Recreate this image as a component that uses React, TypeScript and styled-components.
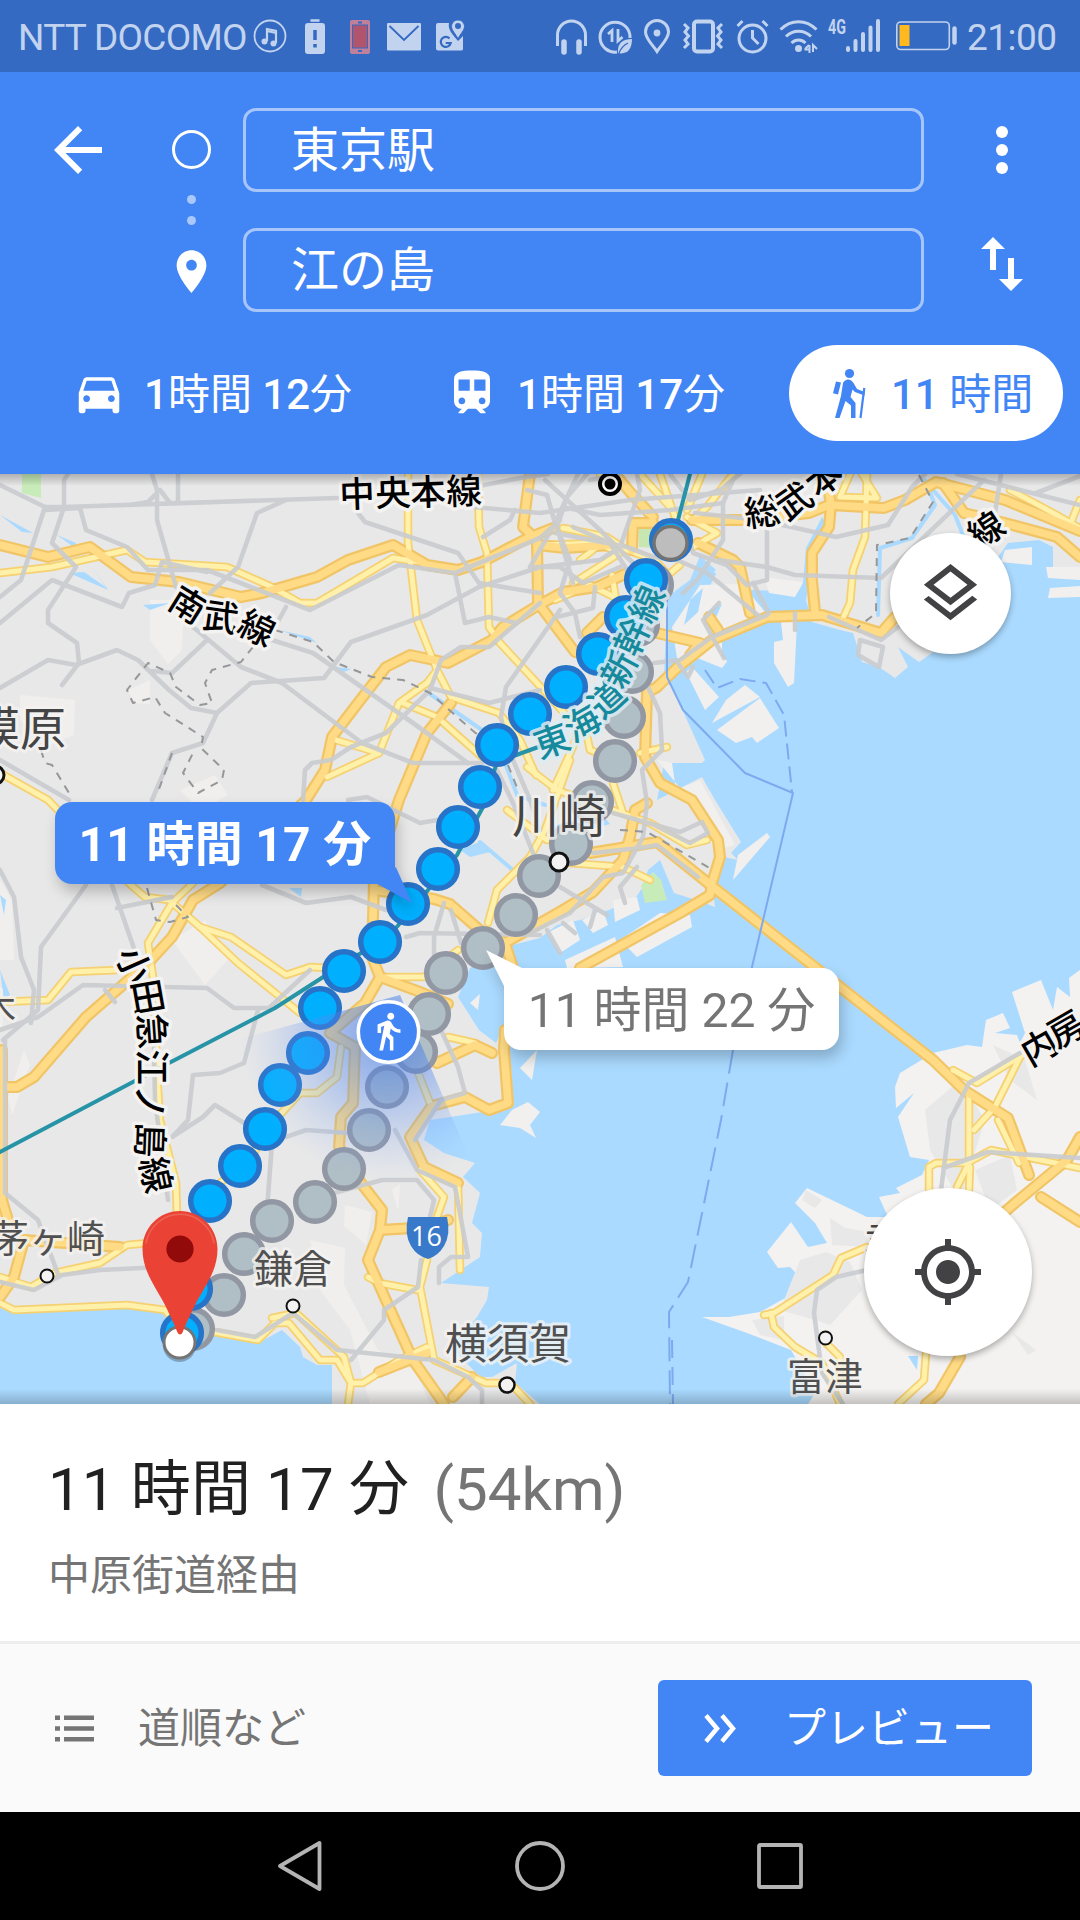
import React from "react";
import styled, { createGlobalStyle } from "styled-components";

const GlobalStyle = createGlobalStyle`
  * {
    box-sizing: border-box;
  }
  body {
    margin: 0;
    background: #000;
    font-family: Roboto, "Noto Sans CJK JP", sans-serif;
  }
`;

const Screen = styled.div`
  width: 1080px;
  height: 1920px;
  display: flex;
  flex-direction: column;
  overflow: hidden;
`;

/* ---------- status bar ---------- */

const StatusBar = styled.div`
  height: 72px;
  flex: none;
  display: flex;
  align-items: center;
  background: #346ac1;
  color: #c2d3ef;
  padding-left: 17px;
  font-size: 37px;
  line-height: 72px;
  white-space: nowrap;
`;

const Carrier = styled.span`
  width: 236px;
  letter-spacing: -0.7px;
  padding: 3px 0 0 1px;
`;

const Clock = styled.span`
  margin-left: 10px;
  padding-top: 3px;
  letter-spacing: -0.5px;
`;

const StatusIcon = styled.svg<{ $w: number; $gap: number }>`
  width: ${(p) => p.$w}px;
  height: 36px;
  flex: none;
  margin-left: ${(p) => p.$gap}px;
  fill: none;
  stroke: #c2d3ef;
  stroke-width: 3;
  overflow: visible;
`;

/* ---------- header ---------- */

const Header = styled.header`
  height: 402px;
  flex: none;
  background: #4285f5;
  color: #fff;
`;

const SearchArea = styled.div`
  height: 240px;
  padding-top: 36px;
  display: grid;
  grid-template-columns: 114px 129px 681px 156px;
`;

const NavColumn = styled.div`
  padding: 6px 0 0 42px;
`;

const MarkerColumn = styled.div`
  display: flex;
  flex-direction: column;
  align-items: center;
  padding: 22px 0 0 26px;
`;

const OriginRing = styled.div`
  width: 39px;
  height: 39px;
  border: 3px solid #fff;
  border-radius: 50%;
`;

const MarkerDot = styled.div<{ $top: number }>`
  width: 9px;
  height: 9px;
  margin-top: ${(p) => p.$top}px;
  border-radius: 50%;
  background: #a9c8fc;
`;

const FieldColumn = styled.div`
  display: flex;
  flex-direction: column;
  gap: 36px;
`;

const Field = styled.div`
  height: 84px;
  border: 3px solid #a5c5fb;
  border-radius: 13px;
  padding-left: 45px;
  font-size: 48px;
  line-height: 80px;
`;

const MenuColumn = styled.div`
  display: flex;
  flex-direction: column;
  padding: 6px 0 0 42px;
  gap: 42px;
`;

const Icon = styled.svg<{ $size: number }>`
  width: ${(p) => p.$size}px;
  height: ${(p) => p.$size}px;
  flex: none;
  display: block;
  fill: currentColor;
`;

const PlaceIcon = styled(Icon)`
  margin-top: 21px;
`;

const Tabs = styled.div`
  display: flex;
  padding: 33px 0 0 39px;
  gap: 19px;
`;

const Tab = styled.div<{ $active?: boolean; $width: number }>`
  width: ${(p) => p.$width}px;
  height: 96px;
  border-radius: 48px;
  padding-left: 33px;
  display: flex;
  align-items: center;
  gap: ${(p) => (p.$active ? 15 : 18)}px;
  font-size: 42px;
  white-space: nowrap;
  background: ${(p) => (p.$active ? "#fff" : "transparent")};
  color: ${(p) => (p.$active ? "#4285f5" : "#fff")};
`;

const TabLabel = styled.span`
  padding-bottom: 5px;
  b {
    font-weight: 500;
  }
`;

/* ---------- map ---------- */

const MapArea = styled.div`
  height: 930px;
  flex: none;
  position: relative;
  overflow: hidden;
  background: #e8e8e8;
  &::after {
    content: "";
    position: absolute;
    inset: 0;
    background: linear-gradient(rgba(0, 0, 0, 0.24), transparent 12px),
      linear-gradient(to top, rgba(0, 0, 0, 0.2), transparent 15px);
    pointer-events: none;
  }
`;

const MapCanvas = styled.svg`
  display: block;
  width: 1080px;
  height: 930px;
  stroke-linejoin: round;
  stroke-linecap: round;
`;

const RoundButton = styled.div<{ $size: number; $top: number; $right: number }>`
  position: absolute;
  top: ${(p) => p.$top}px;
  right: ${(p) => p.$right}px;
  width: ${(p) => p.$size}px;
  height: ${(p) => p.$size}px;
  border-radius: 50%;
  background: #fff;
  color: #424244;
  display: flex;
  align-items: center;
  justify-content: center;
  box-shadow: 0 3px 6px rgba(0, 0, 0, 0.3);
`;

const Callout = styled.div<{ $left: number; $top: number; $width: number; $main?: boolean }>`
  position: absolute;
  left: ${(p) => p.$left}px;
  top: ${(p) => p.$top}px;
  width: ${(p) => p.$width}px;
  height: 82px;
  padding-bottom: 6px;
  border-radius: 17px;
  display: flex;
  align-items: center;
  justify-content: center;
  font-size: 48px;
  letter-spacing: ${(p) => (p.$main ? 0.3 : 0)}px;
  font-weight: ${(p) => (p.$main ? 700 : 400)};
  white-space: nowrap;
  background: ${(p) => (p.$main ? "#4285f5" : "#fff")};
  color: ${(p) => (p.$main ? "#fff" : "#757575")};
  filter: drop-shadow(3px 8px 7px rgba(0, 0, 0, 0.22));
  &::after {
    content: "";
    position: absolute;
    width: 36px;
    height: 36px;
    background: inherit;
    ${(p) =>
      p.$main
        ? "right: -17px; bottom: -19px; clip-path: polygon(0 45%, 55% 0, 100% 100%);"
        : "left: -18px; top: -18px; clip-path: polygon(0 0, 100% 50%, 50% 100%);"}
  }
`;

/* ---------- bottom ---------- */

const Summary = styled.section`
  height: 240px;
  flex: none;
  background: #fff;
  border-bottom: 3px solid #eeeeef;
  padding: 42px 0 0 48px;
`;

const Duration = styled.div`
  font-size: 60px;
  line-height: 88px;
  letter-spacing: 0.15px;
  color: #212121;
  span {
    color: #757575;
    letter-spacing: 0;
    margin-left: 24.5px;
  }
`;

const Via = styled.div`
  margin-top: 12px;
  font-size: 42px;
  line-height: 60px;
  color: #757575;
`;

const Actions = styled.div`
  height: 168px;
  flex: none;
  background: #fafafa;
  display: flex;
  align-items: center;
  justify-content: space-between;
  padding: 0 48px;
  font-size: 42px;
  color: #757575;
`;

const ActionLabel = styled.span`
  padding-bottom: 7px;
`;

const Steps = styled.div`
  display: flex;
  align-items: center;
  gap: 36px;
`;

const PreviewButton = styled.div`
  width: 374px;
  height: 96px;
  border-radius: 6px;
  background: #4285f5;
  color: #fff;
  display: flex;
  align-items: center;
  padding-left: 36px;
  gap: 36px;
`;

const NavBar = styled.nav`
  height: 108px;
  flex: none;
  background: #000;
  display: flex;
  justify-content: center;
  align-items: center;
  gap: 186px;
  svg {
    width: 54px;
    height: 54px;
    fill: none;
    stroke: #b4b4b4;
    stroke-width: 3.8;
    stroke-linejoin: round;
  }
`;

/* ---------- map data, in screen pixels ---------- */

const SEA = [
  "667,597 690,580 700,556 716,574 703,600 730,604 752,590 798,592 803,583 806,548 822,517 828,527 812,560 806,600 812,622 840,630 853,633 862,662 879,667 895,678 908,667 898,647 919,662 932,653 970,600 998,557 1008,543 1039,540 1053,547 1053,567 1080,580 1080,970 1069,978 1070,997 1057,987 1053,1010 1041,980 1012,992 1025,1033 1020,1043 1017,1035 995,1033 1010,1028 1003,1013 986,1020 982,1047 967,1045 933,1053 900,1073 895,1087 896,1108 914,1093 898,1117 910,1157 929,1160 922,1175 896,1188 900,1193 879,1197 888,1217 867,1217 807,1188 795,1203 815,1223 827,1243 808,1247 791,1222 767,1252 778,1268 790,1267 800,1277 795,1293 778,1302 760,1312 729,1317 702,1317 747,1333 791,1350 815,1393 808,1404 540,1404 515,1383 517,1363 492,1377 480,1377 451,1347 477,1317 487,1300 489,1287 441,1283 480,1257 482,1233 472,1223 480,1193 463,1177 475,1163 444,1153 424,1140 430,1120 496,1110 508,1103 512,1075 503,1027 496,1043 479,1030 458,997 470,968 505,947 540,938 557,925 580,920 609,910 636,897 643,887 648,870 660,860 674,893 705,903 715,907 712,883 724,857 738,860 731,853 741,842 715,800 702,777 657,800 664,763 702,763 705,760 672,687 664,680",
  "0,1308 14,1313 127,1307 162,1313 179,1333 217,1333 258,1343 282,1330 300,1347 303,1357 317,1365 332,1365 332,1404 0,1404",
];

const WATER_BITS = [
  "0,515 22,527 33,533 22,532",
  "57,535 76,543 75,548",
  "69,573 84,572 107,588 90,565 108,590",
  "143,605 170,603 150,610",
  "279,630 310,637 317,643",
  "336,667 351,669 344,672",
  "289,888 302,888 301,897",
  "460,850 479,842 490,852 470,857",
  "0,895 6,900 4,915",
  "0,970 10,995 4,1000",
  "908,1356 918,1356 917,1370",
  "540,830 600,812 610,824 560,838",
];

const ISLANDS = [
  "774,642 774,663 788,687 794,683 797,622 781,622 783,640",
  "745,685 726,700 712,723 760,697",
  "717,730 760,698 779,728 757,743 752,737 736,743",
  "686,672 692,667 719,697 705,710",
  "672,627 700,585 742,584 765,612 728,636 732,655 722,668 690,655 678,664",
  "764,577 803,582 795,597 769,593",
  "1046,567 1080,567 1080,580 1048,578",
  "1050,588 1080,586 1080,597 1048,598",
  "1005,550 1032,547 1032,565 1001,562",
  "620,940 660,913 690,915 692,927 637,957",
  "565,960 615,937 623,967 567,968",
  "613,900 637,897 640,910 615,922",
  "582,920 603,910 608,925 593,933",
  "547,933 573,920 580,940 560,953",
  "733,880 738,855 767,833 770,837",
  "520,1068 537,1050 532,1080",
  "500,1125 512,1110 528,1102 540,1112 530,1125 536,1138 520,1128",
  "470,1003 480,994 478,1010",
  "657,760 672,763 676,790 700,780 735,845 715,850 690,800",
];

const SLIVERS = [
  "700,556 716,570 700,582 694,574",
  "690,600 703,588 698,612 684,625",
  "706,612 722,604 712,626",
  "722,640 736,634 734,668 722,656",
];

const LIGHT_PATCHES = [
  "150,600 184,600 182,650 168,664 150,640",
  "20,695 75,700 74,735 50,745 20,720",
  "128,690 150,680 150,704 134,703",
  "180,790 215,775 228,795 200,810",
  "0,880 12,900 14,960 0,960",
  "345,1205 372,1212 366,1245 344,1226",
  "310,1240 345,1248 344,1285 378,1350 415,1370 430,1404 370,1404 350,1330 320,1290",
  "392,1190 400,1184 398,1210",
  "24,1050 30,1065 12,1115 8,1098",
  "172,940 205,920 228,960 205,985",
];

const GREY_PATCHES = [
  "925,1110 960,1080 985,1120 960,1200 930,1150",
  "993,1045 1025,1060 1037,1100 1010,1080",
  "975,1170 1010,1155 1017,1190 990,1210",
  "830,1218 845,1228 870,1232 867,1247 832,1245",
  "800,1260 826,1252 850,1262 862,1290 830,1325 815,1320 780,1310",
  "806,1190 822,1200 815,1208 802,1200",
  "752,1320 784,1316 784,1340 760,1335",
  "1012,1332 1036,1350 1028,1355",
];

const MAJOR = [
  "0,545 48,557 90,547 131,577 179,582 241,597 262,593 317,577 348,560 393,545 427,565 458,570 482,562 528,538 553,528",
  "530,474 523,527 537,540 538,603 575,652",
  "627,573 597,587 563,592 537,606 503,627 492,640 448,663 410,655 386,667 358,703 332,737 325,770 306,800 220,883 193,900 172,937 148,963 86,1017 34,1077 17,1087 0,1087",
  "451,703 427,733 399,800 374,880 372,957 380,977 365,1003 330,1033 355,1047 353,1103 341,1117 339,1147 361,1183 382,1210 380,1230 368,1260 389,1307 413,1360 444,1404",
  "380,1230 430,1227 448,1220",
  "380,977 420,992 448,1004",
  "374,890 434,899 450,904 482,932 505,943 563,910 593,892 623,860 630,837 635,810 647,803",
  "505,943 513,968",
  "657,687 647,693 645,757 660,783 692,800 718,840 720,857 712,883 710,895 680,913 580,968",
  "590,853 657,842 713,887 840,987 933,1060 964,1090 1008,1118 1029,1175",
  "692,520 747,520 809,513 829,505 884,508 905,500 936,482 1005,500 1080,531",
  "943,483 964,513 1005,523 1057,537 1080,557",
  "826,474 831,505 829,527 812,553 812,580 815,612",
  "657,687 678,667 712,640 767,617 822,615 881,633 895,617 920,600",
  "698,543 733,560 740,567 750,613",
  "657,633 700,643 690,655",
  "1080,1137 1067,1160 1015,1203 990,1225",
  "1041,1197 1080,1222",
  "960,1357 939,1393 926,1404",
  "2,1050 2,1200 8,1220",
  "0,1297 14,1277 24,1240 120,1247",
  "632,550 633,523 653,523",
  "537,545 565,548 612,545",
  "615,474 630,492 653,517",
  "379,1372 427,1353",
  "453,1397 472,1377",
  "587,633 603,617",
  "437,1063 475,1045 492,1053",
  "709,617 718,630",
  "505,1030 504,1050 508,1103 489,1110 465,1097 432,1106 410,1137 424,1167 458,1183",
];

const MINOR = [
  "0,573 52,567 127,550 145,562 227,567 272,587 300,603 317,603 393,558 420,562",
  "408,474 408,543 417,620 437,670 451,697 499,713 520,740 536,775",
  "478,474 479,527 487,553 489,627 500,643 550,697 570,720",
  "437,670 427,683 399,703 379,753 327,777",
  "336,740 379,753",
  "403,703 437,717 482,757",
  "0,773 48,800 131,885 145,897 169,900 200,927 231,937 286,975 310,967 330,968",
  "200,927 238,963 300,1013",
  "193,883 172,903 148,943 153,977 158,1090 160,1120 176,1183 177,1215",
  "0,1002 48,1000 71,972 117,970 145,960",
  "0,1277 31,1287 55,1273 100,1263 127,1245 160,1242",
  "0,1303 14,1310 127,1305 165,1310 180,1328",
  "214,1332 258,1340 275,1323 289,1323 320,1360 337,1360 351,1383 348,1404",
  "272,1318 296,1313 344,1357 351,1383 363,1383 399,1360 427,1347",
  "427,1260 420,1287 434,1360 486,1383 510,1383 530,1404",
  "368,1277 379,1283 417,1290",
  "458,1183 460,1270",
  "417,1070 430,1103",
  "420,1170 444,1197 437,1217",
  "341,1047 337,1077 317,1093 300,1093 275,1120 251,1157 220,1183",
  "382,977 424,977 458,950",
  "448,1037 475,1043",
  "570,760 545,830 530,857 497,890 488,923",
  "527,767 557,790 613,810 650,823 687,845 707,840",
  "570,863 623,867 650,880",
  "613,783 623,813",
  "507,810 547,840",
  "563,528 607,537 627,550 655,560",
  "540,545 597,543 620,553 573,583",
  "600,474 627,487 647,513",
  "640,474 670,507",
  "660,474 676,520",
  "702,474 687,510",
  "733,474 707,507 693,520",
  "687,517 717,533 693,547",
  "867,474 865,537 853,570 850,603 843,618",
  "850,474 840,497 877,498 862,474",
  "1010,490 1053,513 1080,528",
  "1080,500 1072,520",
  "953,1070 977,1083 1019,1057 1080,1023",
  "1020,1057 995,1107 974,1130",
  "969,1093 969,1163 957,1187",
  "929,1190 929,1167 936,1163 967,1163 991,1150 1080,1168",
  "998,1120 1019,1163",
  "970,1167 969,1190",
  "867,1247 841,1258 833,1275 774,1313 764,1315",
  "771,1313 774,1327 795,1347 822,1363 840,1404",
  "826,1343 840,1357 840,1380",
  "926,1353 924,1380 898,1404",
  "553,790 573,747 583,717 590,750 615,760",
  "640,753 667,747",
  "555,600 590,585 620,600",
  "606,540 580,560",
  "612,575 616,600 625,612",
  "655,560 668,575 680,565",
];

const STREETS = [
  "0,485 45,507 64,507 337,498",
  "68,474 64,480 64,507 52,543 76,567 48,610 48,623 77,643 79,663",
  "62,685 79,663",
  "0,688 48,660 76,665 117,650 138,660 169,690 191,708 217,713 251,683 324,678 351,642 427,615 479,587 540,567 600,560 620,547 640,490 637,474",
  "217,713 203,743 172,753 152,800",
  "152,474 157,490 157,520 176,587",
  "160,490 170,503 178,503 178,474",
  "155,495 148,502 130,505",
  "45,510 80,508 86,530 127,547 148,570 207,570 310,610 399,565 455,573 540,538 560,520",
  "286,500 257,513 238,567 210,593",
  "358,513 365,522 458,553 479,583 540,593",
  "455,573 465,623 489,617 517,623",
  "0,623 52,580 122,607 129,593 155,585 162,562 207,572",
  "207,640 172,673 152,671",
  "193,627 241,667 282,683 362,743 413,763 482,763",
  "272,640 313,653 413,723 468,763",
  "540,603 489,647 461,647 441,660 430,690 386,733 351,747 331,760 312,763 305,770 303,800",
  "430,688 489,703 540,690",
  "560,610 506,687 501,717 510,760",
  "0,760 69,800",
  "275,627 286,607",
  "45,507 21,580 0,597",
  "0,870 14,897 21,957 34,990 31,1023",
  "86,885 41,947 38,1010 3,1040",
  "112,885 138,960",
  "117,908 172,897",
  "0,1030 38,1017 83,985 207,988 234,1008 269,1008 310,970",
  "105,990 115,1002",
  "258,1010 244,1063 220,1073 193,1075 188,1120 172,1137 203,1117 215,1105 244,1123",
  "262,885 306,903 351,897 386,910",
  "272,1143 267,1210",
  "286,1137 306,1130 348,1133",
  "334,1193 382,1180 417,1180 434,1200 430,1217",
  "5,1040 5,1193 38,1220 59,1277",
  "0,1282 34,1290 62,1275 100,1270 162,1267",
  "153,980 155,1100 168,1200",
  "217,1330 255,1337 293,1313 337,1350 434,1360 468,1377 482,1390 482,1404",
  "351,1360 384,1320 384,1310 418,1287 421,1260",
  "395,1130 417,1170 455,1187 468,1257 451,1257 439,1267 439,1283",
  "441,1030 458,1067 465,1093 441,1100 415,1140",
  "444,903 434,937 434,957",
  "451,910 461,943",
  "406,937 420,933 540,935",
  "348,800 367,797 420,823 437,820",
  "450,492 520,478 548,474",
  "473,507 540,513 630,500 760,490",
  "527,490 547,495 555,523 570,560 560,593 575,613 580,637",
  "483,537 510,520 515,510",
  "587,474 567,497 557,527 573,583",
  "578,474 553,527 530,567 560,567 583,583 620,567",
  "555,533 627,547 653,557 677,560 707,573 760,617",
  "563,507 600,515 670,510 723,503",
  "573,527 610,543 627,570 650,600",
  "557,617 593,608 595,587",
  "545,480 600,530 640,570",
  "590,480 620,474",
  "687,530 693,553 727,565 747,585 767,580 767,527",
  "695,513 760,520 836,537 888,525 912,487 925,474",
  "719,560 767,567 795,575 881,578 984,480",
  "733,480 723,503 723,540 697,580 683,593",
  "753,583 769,613",
  "719,603 703,620 724,658",
  "678,663 688,677 693,667",
  "654,663 680,660 712,637 767,615",
  "795,613 795,630",
  "829,617 881,640 898,627",
  "860,640 883,647 879,667 858,655 860,640",
  "648,687 660,713 662,750 642,770 647,803 643,837 623,873 603,877 570,913 530,933",
  "637,867 620,887 625,903",
  "497,770 513,803 533,853 540,870",
  "513,760 530,800 540,830",
  "560,887 607,915",
  "595,910 590,927",
  "547,930 560,953",
  "563,923 575,933",
  "613,813 680,832 702,822 708,833 690,843 650,823",
  "593,853 640,848 657,845 698,877",
  "957,474 1020,490 1080,505",
  "995,513 1001,474",
  "1036,493 1080,476",
  "670,474 690,500 720,490 740,474",
  "867,1270 836,1277 817,1290 814,1313 822,1373 843,1404",
  "1020,1053 969,1083 950,1120 941,1190",
  "946,1167 988,1152 1080,1158",
];

const BORDERS = [
  "253,647 241,662 212,670 205,683 212,703 200,705 176,687 170,673 148,663 127,690 133,703 155,697 165,713 203,737 201,748 224,770 222,780 198,793 183,773 193,753",
  "172,753 158,792",
  "275,630 313,642 334,662 372,677 403,680 430,693 472,730 490,745",
  "41,750 45,763 52,765 69,793",
  "919,475 933,502 910,538 877,545 876,613 857,628",
  "620,830 647,832 713,870",
  "508,765 518,790",
  "147,888 156,920 170,922 188,917 174,903",
];

const RIVERS = [
  "430,694 482,730",
  "505,763 517,795 545,805",
  "933,490 955,515 965,540",
  "925,480 935,505 912,538 880,548 878,615",
  "480,842 515,872",
];

const RAILWAY = [
  "690,474 678,520",
  "552,742 497,762 483,807 457,855 428,890 390,935 345,963 275,1008 169,1063 0,1152",
];

const BLUE_DOTS = [
  [671, 540], [646, 580], [626, 617], [598, 654], [566, 687], [530, 714], [497, 745], [480, 787],
  [458, 827], [438, 869], [408, 904], [380, 942], [344, 971], [320, 1008], [308, 1053], [280, 1085],
  [265, 1129], [240, 1166], [210, 1201], [191, 1289], [182, 1333],
];

const GREY_DOTS = [
  [652, 585], [638, 625], [632, 672], [624, 717], [615, 761], [592, 802], [571, 844], [539, 876],
  [516, 915], [483, 948], [446, 973], [429, 1014], [416, 1052], [387, 1087], [369, 1130], [344, 1169],
  [315, 1202], [272, 1221], [244, 1254], [224, 1295], [193, 1329],
];

// [glyph, x, y, angle]
type Glyph = [string, number, number, number];

const RAIL_GLYPHS: Glyph[] = [
  ["中", 357, 494, -2], ["央", 393, 493, -2], ["本", 428, 492, -2], ["線", 464, 491, -2],
  ["南", 188, 605, 32], ["武", 221, 617, 8], ["線", 257, 628, 26],
  ["総", 762, 512, -8], ["武", 794, 501, -35], ["本", 824, 478, -38], ["線", 986, 530, -33],
  ["小", 134, 965, 66], ["田", 148, 997, 80], ["急", 152, 1031, 86], ["江", 152, 1067, 90],
  ["ノ", 150, 1102, 88], ["島", 150, 1140, 92], ["線", 156, 1175, 78],
  ["内", 1039, 1047, -30], ["房", 1066, 1029, -30],
];

const SHINKANSEN_GLYPHS: Glyph[] = [
  ["東", 552, 741, -20], ["海", 582, 723, -30], ["道", 607, 699, -42],
  ["新", 619, 669, -62], ["幹", 632, 637, -66], ["線", 647, 604, -66],
];

const PLACES = [
  { name: "模原", x: -26, y: 745, size: 46, color: "#444" },
  { name: "川崎", x: 512, y: 833, size: 47, color: "#444" },
  { name: "茅ヶ崎", x: -9, y: 1252, size: 38, color: "#505050" },
  { name: "鎌倉", x: 254, y: 1283, size: 39, color: "#505050" },
  { name: "横須賀", x: 445, y: 1359, size: 42, color: "#505050" },
  { name: "富津", x: 787, y: 1390, size: 38, color: "#505050" },
  { name: "君津", x: 865, y: 1255, size: 37, color: "#444" },
  { name: "木", x: -20, y: 1021, size: 36, color: "#505050" },
];

// x, y, radius, ring width
const STATIONS = [
  [-5, 775, 9, 3],
  [559, 862, 9, 3],
  [47, 1276, 6.5, 2],
  [293, 1306, 6.5, 2],
  [507, 1385, 7.5, 2.5],
  [825.5, 1338, 6.5, 2],
];

const Lines = ({ data, color, width }: { data: string[]; color: string; width: number }) => (
  <g fill="none" stroke={color} strokeWidth={width}>
    {data.map((points, i) => (
      <polyline key={i} points={points} />
    ))}
  </g>
);

const Areas = ({ data, color }: { data: string[]; color: string }) => (
  <g fill={color}>
    {data.map((points, i) => (
      <polygon key={i} points={points} />
    ))}
  </g>
);

const Glyphs = ({ data, color, halo }: { data: Glyph[]; color: string; halo: string }) => (
  <g
    fill={color}
    stroke={halo}
    strokeWidth={7}
    paintOrder="stroke"
    fontSize={35.5}
    fontWeight={500}
    fontFamily="Noto Sans CJK JP, sans-serif"
    textAnchor="middle"
  >
    {data.map(([ch, x, y, angle], i) => (
      <text key={i} transform={`translate(${x} ${y}) rotate(${angle})`} y={13}>
        {ch}
      </text>
    ))}
  </g>
);

const Dots = ({ data, fill, stroke }: { data: number[][]; fill: string; stroke: string }) => (
  <g fill={fill} stroke={stroke} strokeWidth={5.5}>
    {data.map(([x, y]) => (
      <circle key={`${x}-${y}`} cx={x} cy={y} r={19.3} />
    ))}
  </g>
);

const WALK_PATH =
  "M13.5 5.5c1.1 0 2-.9 2-2s-.9-2-2-2-2 .9-2 2 .9 2 2 2zM9.8 8.9L7 23h2.1l1.8-8 2.1 2v6h2v-7.5l-2.1-2 .6-3C14.8 12 16.8 13 19 13v-2c-1.9 0-3.5-1-4.3-2.4l-1-1.6c-.4-.6-1-1-1.7-1-.3 0-.5.1-.8.1L6 8.3V13h2V9.6l1.8-.7";

function RouteMap() {
  return (
    <MapCanvas viewBox="0 474 1080 930">
      <defs>
        <radialGradient id="cone" gradientUnits="userSpaceOnUse" cx="389" cy="1032" r="150">
          <stop offset="0.1" stopColor="#3f78e8" stopOpacity="0.6" />
          <stop offset="0.55" stopColor="#5b8df0" stopOpacity="0.3" />
          <stop offset="1" stopColor="#8fb2f5" stopOpacity="0" />
        </radialGradient>
      </defs>

      <rect x="690" y="965" width="390" height="439" fill="#f3f2f0" />
      <Areas data={LIGHT_PATCHES} color="#f0efed" />
      <Areas data={SEA} color="#aadaff" />
      <Areas data={GREY_PATCHES} color="#e8e8e8" />
      <Areas data={WATER_BITS} color="#aadaff" />
      <Areas data={ISLANDS} color="#f1f0ee" />
      <Areas data={SLIVERS} color="#aadaff" />
      <polygon points="22,474 41,474 41,498 22,493" fill="#c8ecb9" />
      <polygon points="639,523 655,520 655,548 639,547" fill="#c8e6b0" />
      <polygon points="641,885 653,872 661,880 667,900 645,903" fill="#c8ecb9" />

      <Lines data={RIVERS} color="#aadaff" width={4} />
      <Lines data={MINOR} color="#f5d172" width={8.5} />
      <Lines data={MAJOR} color="#f1c566" width={12} />
      <Lines data={MINOR} color="#fff0aa" width={5} />
      <Lines data={MAJOR} color="#ffdb86" width={7.5} />
      <g opacity="0.9">
        <Lines data={STREETS} color="#c9ccd0" width={4.6} />
      </g>
      <g fill="none" stroke="#959799" strokeWidth="2" strokeDasharray="8 7" strokeLinecap="butt">
        {BORDERS.map((points) => (
          <polyline key={points} points={points} />
        ))}
      </g>

      {/* ferry lines */}
      <g fill="none" stroke="#7caaf0" strokeWidth="2" strokeLinecap="butt">
        <polyline points="667,597 667,677 683,710 745,773 793,793 752,967 733,1050" />
        <polyline points="733,1050 721,1120 688,1282 669,1312 670,1404" strokeDasharray="24 9" />
        <polyline points="672,1340 673,1404" strokeDasharray="18 9" />
        <polyline points="705,670 717,688 740,679 766,683 784,715 792,792" strokeDasharray="16 7" />
      </g>

      <Lines data={RAILWAY} color="#2693a6" width={4} />
      <Glyphs data={RAIL_GLYPHS} color="#000" halo="#f4f3f1" />

      <Dots data={GREY_DOTS} fill="#b0bec5" stroke="#9197a3" />
      <Dots data={BLUE_DOTS} fill="#00b0ff" stroke="#2673c8" />
      <Glyphs data={SHINKANSEN_GLYPHS} color="#158a9c" halo="rgba(220,236,244,0.85)" />

      <g fontFamily="Noto Sans CJK JP, sans-serif" stroke="#f4f3f1" strokeOpacity="0.8" strokeWidth="6" paintOrder="stroke">
        {PLACES.map((p) => (
          <text key={p.name} x={p.x} y={p.y} fontSize={p.size} fill={p.color}>
            {p.name}
          </text>
        ))}
      </g>
      {STATIONS.map(([x, y, r, w]) => (
        <circle key={y} cx={x} cy={y} r={r} fill="#f3f3f3" stroke="#111" strokeWidth={w} />
      ))}
      <circle cx="610" cy="484" r="10" fill="#fff" stroke="#000" strokeWidth="4" />
      <circle cx="610" cy="484" r="5.5" />

      <path d="M408 1217h39q4 17-3 29-6 10-16 13-11-3-17-13-7-12-3-29z" fill="#3879ca" />
      <text x="426.5" y="1246" textAnchor="middle" fontSize="27" fill="#fff" fontFamily="Open Sans, sans-serif">
        16
      </text>

      <polygon points="400,995 240,1039 255,1150 330,1200 420,1210 475,1172" fill="url(#cone)" />
      <circle cx="388.5" cy="1032" r="30.2" fill="#4285f5" stroke="#fff" strokeWidth="3.6" />
      <path d={WALK_PATH} fill="#fff" transform="translate(367 1010) scale(1.76)" />

      <circle cx="670.5" cy="543" r="16.5" fill="#bdbdbd" stroke="#737373" strokeWidth="3.4" />
      <circle cx="179.5" cy="1345.5" r="16.5" fill="#000" opacity="0.25" />
      <circle cx="179.5" cy="1342.5" r="15.5" fill="#fff" stroke="#757575" strokeWidth="3" />
      <path
        d="M180 1211c-21 0-37.5 17-37.5 38 0 24 15 40 24 59 6 13 9 19 11 24.500q1 2 2.500 2t2.500-2c2-5.500 5-11.500 11-24.500 9-19 24-35 24-59 0-21-16.500-38-37.500-38z"
        fill="#ea4335"
      />
      <path d="M177 1325h6.5l-1.500 8q-1.500 2-3.500 0z" fill="#ea4335" />
      <path d="M146 1243a34.5 34.5 0 0 1 68 0" fill="none" stroke="#ed6356" strokeWidth="1.5" />
      <circle cx="180" cy="1249" r="13.6" fill="#920a0a" />
    </MapCanvas>
  );
}

function StatusIcons() {
  return (
    <>
      <StatusIcon $w={34} $gap={0} viewBox="0 0 34 36">
        <circle cx="17" cy="18" r="15.5" strokeWidth="1.8" />
        <path d="M14 23V11l9 2v12" strokeWidth="2.2" />
        <path d="M14 13l9 2" strokeWidth="2.2" />
        <circle cx="11.5" cy="23.5" r="3" fill="#c2d3ef" stroke="none" />
        <circle cx="20.5" cy="25.5" r="3" fill="#c2d3ef" stroke="none" />
      </StatusIcon>
      <StatusIcon $w={20} $gap={18} viewBox="0 0 20 36">
        <rect x="0" y="5" width="20" height="31" rx="3" fill="#c2d3ef" stroke="none" />
        <path d="M5.5 2.5h9" strokeWidth="2.5" />
        <path d="M10 12v10M10 26v3.5" stroke="#346ac1" strokeWidth="3.5" />
      </StatusIcon>
      <StatusIcon $w={20} $gap={25} viewBox="0 0 20 36">
        <rect x="0" y="2" width="20" height="34" rx="2" fill="#c07f9a" stroke="none" />
        <rect x="2.5" y="7" width="15" height="23" fill="#b1556f" stroke="#346ac1" strokeWidth="1" />
        <path d="M8 4.5h4M8 33h4" stroke="#346ac1" strokeWidth="2" />
      </StatusIcon>
      <StatusIcon $w={34} $gap={17} viewBox="0 0 34 36">
        <rect y="5" width="34" height="27.5" rx="1" fill="#c2d3ef" stroke="none" />
        <path d="M2.5 8L17 22 31.5 8" stroke="#346ac1" strokeWidth="1.8" />
      </StatusIcon>
      <StatusIcon $w={29} $gap={15} viewBox="0 0 29 36">
        <path d="M2 5h11c-1 5 1 9 9 18l5-5v13q0 1.500-2 1.500H2q-2 0-2-2V7q0-2 2-2z" fill="#c2d3ef" stroke="none" />
        <path d="M22 2c-4 0-6.5 3-6.5 6.5 0 4 4 7 6.5 12.5 2.5-5.500 6.5-8.500 6.5-12.500C28.5 5 26 2 22 2z" fill="#c2d3ef" stroke="#346ac1" strokeWidth="1" />
        <circle cx="22" cy="8" r="3" fill="#346ac1" stroke="none" />
        <path d="M13.5 20.5a5 5 0 1 0 1.2 4.5h-5" stroke="#346ac1" strokeWidth="2.2" />
      </StatusIcon>

      <StatusIcon $w={31} $gap={91} viewBox="0 0 31 36">
        <path d="M1.5 28V17a14 14 0 0 1 28 0v11" />
        <path d="M8 24v10M23 24v10" strokeWidth="5.5" strokeLinecap="round" />
      </StatusIcon>
      <StatusIcon $w={33} $gap={12} viewBox="0 0 33 36">
        <path d="M31 20A15 15 0 1 0 18 34" />
        <path d="M9 16l4-3.5V24M19 11v12l4.5-4" strokeWidth="2.8" />
        <path d="M19 35c-1-10 5-14 14-14 0 10-5 16-14 14z" fill="#c2d3ef" stroke="none" />
        <path d="M20 35c2-5 5-8 9-10" stroke="#346ac1" strokeWidth="1.2" />
      </StatusIcon>
      <StatusIcon $w={26} $gap={12} viewBox="0 0 26 36">
        <path d="M13 33.5C9 27 1.5 21 1.5 14a11.500 11.500 0 0 1 23 0c0 7-7.500 13-11.500 19.500z" />
        <circle cx="13" cy="15" r="3.4" fill="#c2d3ef" stroke="none" />
      </StatusIcon>
      <StatusIcon $w={42} $gap={12} viewBox="0 0 42 36">
        <rect x="12" y="3.5" width="19" height="30" rx="3" strokeWidth="4" />
        <path d="M2 6l4 4-3 4 3.5 4-3.5 4 3 4-4 4M40 6l-4 4 3 4-3.5 4 3.500 4-3 4 4 4" />
      </StatusIcon>
      <StatusIcon $w={33} $gap={12} viewBox="0 0 33 36">
        <circle cx="16.5" cy="20.5" r="13.5" />
        <path d="M16.5 12v8l6 6M1.5 8l5-5M31.500 8l-5-5" />
      </StatusIcon>
      <StatusIcon $w={39} $gap={10} viewBox="0 0 39 36">
        <path d="M1.5 11.5C12 1 27 1 37.5 11.5M7 18.500c7-7 18-7 25 0M12.500 25c4-4 10-4 14 0" />
        <circle cx="19.5" cy="30.5" r="3.5" fill="#c2d3ef" stroke="none" />
        <path d="M25.500 31.500h6M30.500 27v8M26 31l4-4M34 34v-7l4 4" strokeWidth="2" />
      </StatusIcon>
      <StatusIcon $w={52} $gap={10} viewBox="0 0 52 36">
        <text x="0" y="16" fontSize="20" fontWeight="700" fill="#c2d3ef" stroke="none" textLength="18" lengthAdjust="spacingAndGlyphs">
          4G
        </text>
        <path d="M20 30v2M27.500 23v9M35 16v16M42.500 9.500v22.500M50 3v29" strokeWidth="4" strokeLinecap="round" />
      </StatusIcon>
      <StatusIcon $w={61} $gap={16} viewBox="0 0 61 36">
        <rect x="0.8" y="4" width="52.5" height="27.5" rx="4" strokeWidth="1.6" />
        <rect x="3.5" y="7" width="10" height="21" fill="#ffb91f" stroke="none" />
        <path d="M58.500 10.500v14" strokeWidth="4.5" strokeLinecap="round" />
      </StatusIcon>
    </>
  );
}

export default function App() {
  return (
    <Screen>
      <GlobalStyle />
      <StatusBar>
        <Carrier>NTT DOCOMO</Carrier>
        <StatusIcons />
        <Clock>21:00</Clock>
      </StatusBar>

      <Header>
        <SearchArea>
          <NavColumn>
            <Icon $size={72} viewBox="0 0 24 24">
              <path d="M20 11H7.830l5.590-5.590L12 4l-8 8 8 8 1.410-1.410L7.830 13H20v-2z" />
            </Icon>
          </NavColumn>
          <MarkerColumn>
            <OriginRing />
            <MarkerDot $top={26} />
            <MarkerDot $top={12} />
            <PlaceIcon $size={51} viewBox="0 0 24 24">
              <path d="M12 2C8.130 2 5 5.130 5 9c0 5.250 7 13 7 13s7-7.750 7-13c0-3.870-3.130-7-7-7zm0 9.500c-1.380 0-2.500-1.120-2.500-2.500s1.120-2.500 2.500-2.500 2.500 1.120 2.500 2.500-1.120 2.500-2.500 2.500z" />
            </PlaceIcon>
          </MarkerColumn>
          <FieldColumn>
            <Field>東京駅</Field>
            <Field>江の島</Field>
          </FieldColumn>
          <MenuColumn>
            <Icon $size={72} viewBox="0 0 24 24">
              <circle cx="12" cy="6" r="2" />
              <circle cx="12" cy="12" r="2" />
              <circle cx="12" cy="18" r="2" />
            </Icon>
            <Icon $size={72} viewBox="0 0 24 24">
              <path d="M16 17.010V10h-2v7.010h-3L15 21l4-3.990h-3zM9 3L5 6.990h3V14h2V6.990h3L9 3z" />
            </Icon>
          </MenuColumn>
        </SearchArea>
        <Tabs>
          <Tab $width={354}>
            <Icon $size={54} viewBox="0 0 24 24">
              <path d="M18.920 6.010C18.720 5.420 18.160 5 17.500 5h-11c-.66 0-1.210.42-1.420 1.010L3 12v8c0 .55.45 1 1 1h1c.55 0 1-.45 1-1v-1h12v1c0 .55.45 1 1 1h1c.55 0 1-.45 1-1v-8l-2.080-5.990zM6.500 16c-.83 0-1.500-.67-1.500-1.500S5.670 13 6.500 13s1.500.67 1.500 1.500S7.330 16 6.500 16zm11 0c-.83 0-1.500-.67-1.500-1.500s.67-1.500 1.500-1.500 1.500.67 1.500 1.500-.67 1.500-1.500 1.500zM5 11l1.500-4.500h11L19 11H5z" />
            </Icon>
            <TabLabel>
              <b>1</b>時間 <b>12</b>分
            </TabLabel>
          </Tab>
          <Tab $width={358}>
            <Icon $size={54} viewBox="0 0 24 24">
              <path d="M12 2c-4.420 0-8 .5-8 4v9.500C4 17.430 5.570 19 7.500 19L6 20.500v.5h2.230l2-2h3.540l2 2H18v-.5L16.500 19c1.930 0 3.500-1.570 3.500-3.500V6c0-3.500-3.580-4-8-4zM7.500 17c-.83 0-1.500-.67-1.500-1.500S6.670 14 7.500 14s1.500.67 1.500 1.500S8.330 17 7.500 17zm3.500-6H6V6h5v5zm2 0V6h5v5h-5zm3.500 6c-.83 0-1.500-.67-1.500-1.500s.67-1.500 1.500-1.500 1.500.67 1.500 1.500-.67 1.500-1.500 1.500z" />
            </Icon>
            <TabLabel>
              <b>1</b>時間 <b>17</b>分
            </TabLabel>
          </Tab>
          <Tab $width={274} $active>
            <Icon $size={54} viewBox="0 0 54 54">
              <circle cx="27.5" cy="7.5" r="4.6" />
              <path d="M21 17q2-4 6-3.500 3 .5 4.500 3.500l3.500 6 7.500 3v3.500l-9.500-3.500-2.500-2.500-2 7.500 5 6V52h-4.500V39.500L23.500 35 17.500 52H13l6-22z" />
              <path d="M14 15.500l5 1-3 12-5-1.200z" />
              <path d="M42.300 22L38.500 52" fill="none" stroke="currentColor" strokeWidth="2.2" />
            </Icon>
            <TabLabel>
              <b>11</b> 時間
            </TabLabel>
          </Tab>
        </Tabs>
      </Header>

      <MapArea>
        <RouteMap />
        <Callout $left={55} $top={328} $width={340} $main>
          11 時間 17 分
        </Callout>
        <Callout $left={504} $top={494} $width={335}>
          11 時間 22 分
        </Callout>
        <RoundButton $size={121} $top={59} $right={69}>
          <Icon $size={71} viewBox="0 0 24 24">
            <path d="M11.990 18.540l-7.370-5.730L3 14.070l9 7 9-7-1.630-1.270-7.380 5.740zM12 16l7.360-5.730L21 9l-9-7-9 7 1.630 1.270L12 16zm0-11.470L17.740 9 12 13.470 6.260 9 12 4.530z" />
          </Icon>
        </RoundButton>
        <RoundButton $size={168} $top={714} $right={48}>
          <Icon $size={72} viewBox="0 0 24 24">
            <path d="M12 8c-2.210 0-4 1.790-4 4s1.790 4 4 4 4-1.790 4-4-1.790-4-4-4zm8.940 3A8.994 8.994 0 0 0 13 3.060V1h-2v2.060A8.994 8.994 0 0 0 3.060 11H1v2h2.060A8.994 8.994 0 0 0 11 20.940V23h2v-2.060A8.994 8.994 0 0 0 20.940 13H23v-2h-2.060zM12 19c-3.870 0-7-3.130-7-7s3.130-7 7-7 7 3.130 7 7-3.130 7-7 7z" />
          </Icon>
        </RoundButton>
      </MapArea>

      <Summary>
        <Duration>
          11 時間 17 分<span>(54km)</span>
        </Duration>
        <Via>中原街道経由</Via>
      </Summary>
      <Actions>
        <Steps>
          <Icon $size={54} viewBox="0 0 54 54">
            <path d="M7 14.500h5V19H7zM7 25.300h5v4.500H7zM7 36h5v4.500H7zM16 14.500h30V19H16zM16 25.300h30v4.500H16zM16 36h30v4.500H16z" />
          </Icon>
          <ActionLabel>道順など</ActionLabel>
        </Steps>
        <PreviewButton>
          <Icon $size={54} viewBox="0 0 54 54">
            <path d="M12 14.500l11 13-11 13M28 14.500l11 13-11 13" fill="none" stroke="currentColor" strokeWidth="4.5" />
          </Icon>
          <ActionLabel>プレビュー</ActionLabel>
        </PreviewButton>
      </Actions>

      <NavBar>
        <svg viewBox="0 0 54 54">
          <path d="M46.500 4v46L7 27z" />
        </svg>
        <svg viewBox="0 0 54 54">
          <circle cx="27" cy="27" r="23" />
        </svg>
        <svg viewBox="0 0 54 54">
          <rect x="6" y="6" width="42" height="42" rx="1" />
        </svg>
      </NavBar>
    </Screen>
  );
}
